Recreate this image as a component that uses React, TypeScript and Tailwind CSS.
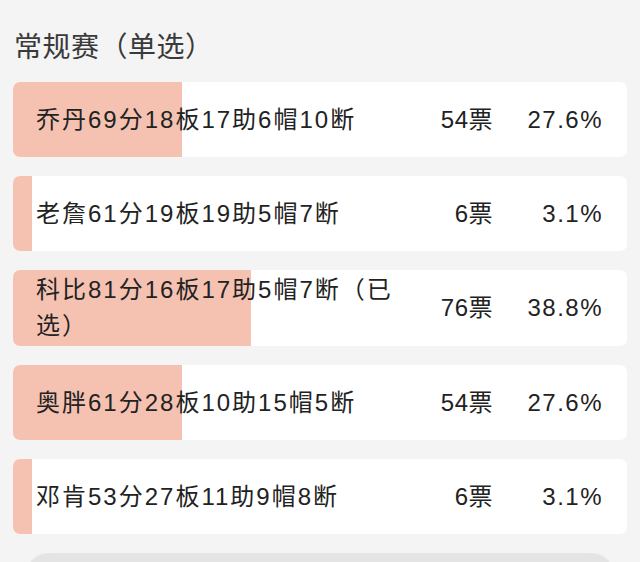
const options = [
  { label: "乔丹69分18板17助6帽10断", votes: 54, pct: 27.6 },
  { label: "老詹61分19板19助5帽7断", votes: 6, pct: 3.1 },
  { label: "科比81分16板17助5帽7断（已选）", votes: 76, pct: 38.8 },
  { label: "奥胖61分28板10助15帽5断", votes: 54, pct: 27.6 },
  { label: "邓肯53分27板11助9帽8断", votes: 6, pct: 3.1 },
]

export default function App() {
  return (
    <div
      className="min-h-screen w-full overflow-hidden bg-[#f4f4f4] px-[13px] pt-[28px] text-[#222]"
      style={{ fontFamily: '"Liberation Sans", "Noto Sans CJK SC", sans-serif' }}
    >
      {/* Title */}
      <h2 className="mb-[14px] pl-[1px] text-[28px] leading-[40px] tracking-[0.5px] text-[#3a3a3a]">常规赛（单选）</h2>

      {/* Vote options */}
      <div className="flex flex-col gap-[19px]">
        {options.map((o) => (
          <div
            key={o.label}
            className="relative flex min-h-[75px] items-center overflow-hidden rounded-[7px] bg-white py-[2px] pl-[23px] pr-[24px]"
          >
            {/* progress fill */}
            <div
              className="absolute inset-y-0 left-0 bg-[#f5c2b2]"
              style={{ width: `${o.pct}%` }}
            />
            <div className="relative w-[384px] text-[24px] leading-[36px] tracking-[2px]">{o.label}</div>
            <div className="relative flex-1 text-right text-[24px] leading-[36px] tracking-[0.5px]">{o.votes}票</div>
            <div className="relative w-[110px] text-right text-[24px] leading-[36px] tracking-[1.5px]">
              {o.pct.toFixed(1)}%
            </div>
          </div>
        ))}
      </div>

      {/* submit button (cut off) */}
      <div className="mx-[12px] mt-[19px] h-[50px] rounded-[24px] bg-[#e4e4e4]" />
    </div>
  )
}
